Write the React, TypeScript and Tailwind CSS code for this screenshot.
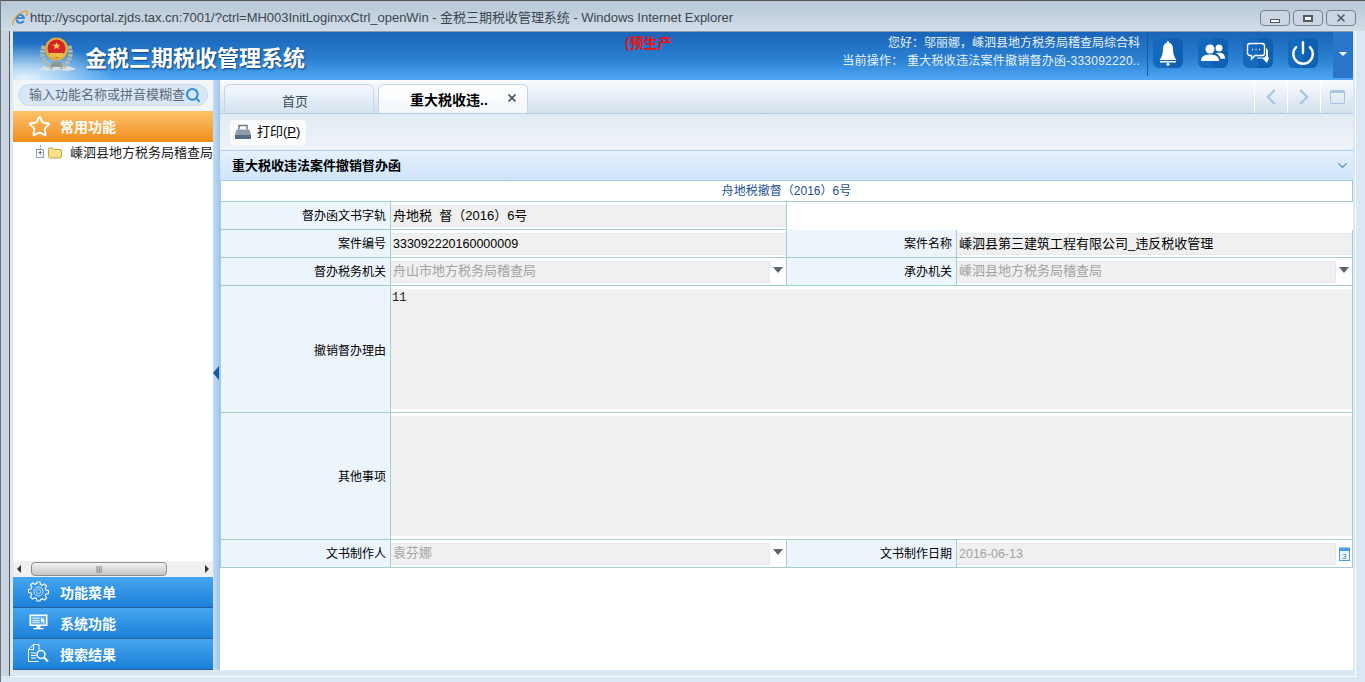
import { Power, ChevronLeft, ChevronRight, ChevronDown, Search, X, Star } from "lucide-react";

const FONT = "font-['Liberation_Sans','Noto_Sans_CJK_SC',sans-serif]";

function IeLogo() {
  return (
    <svg width="16" height="16" viewBox="0 0 16 16" className="shrink-0">
      <path
        d="M3.500 9h9.500c0-3-2-5-4.800-5C5.300 4 3.500 6.200 3.500 9c0 2.800 1.900 4.800 4.700 4.800 2.100 0 3.800-1.100 4.500-3H10c-.4.800-1 1.200-1.800 1.200-1.300 0-2.100-.9-2.100-2.100zM6.200 7.300C6.400 6.400 7.100 5.800 8.200 5.800s1.800.6 2 1.500z"
        fill="#2c86dc"
        fillRule="evenodd"
      />
      <path d="M1 15C-.5 12.500 4 5 9.500 2.300 12.500.8 15.500.5 15.500 2.500c0 1-.5 2.500-1.500 3.700" fill="none" stroke="#dfa21f" strokeWidth="1.200" />
    </svg>
  );
}

function Emblem() {
  return (
    <svg width="40" height="40" viewBox="0 0 40 40" className="shrink-0">
      <path d="M1 33 C9 29 14 29 20 31 C26 29 31 29 39 33 C31 36 26 35 20 34 C14 35 9 36 1 33Z" fill="#d5e1e6" />
      <path d="M7 10 C3 19 7 28 16 32 M32 10 C36 19 32 28 23 32" fill="none" stroke="#aeb9ae" strokeWidth="4.500" strokeDasharray="3 1" />
      <circle cx="19.500" cy="13" r="11.500" fill="#dcae3c" />
      <circle cx="19.500" cy="12.500" r="9" fill="#d5232a" />
      <path d="M19.500 6l1.100 2.700h2.900l-2.300 1.800.9 2.800-2.600-1.700-2.600 1.700.9-2.800-2.300-1.800h2.900z" fill="#f5d34c" />
      <path d="M12.500 17h14v4h-14z" fill="#e8be45" />
      <path d="M15 26h9l2 5H13z" fill="#8d9996" />
    </svg>
  );
}

function Printer() {
  return (
    <svg width="18" height="18" viewBox="0 0 18 18">
      <path d="M5 6.500V2.500h8v4" fill="none" stroke="#6d7b89" strokeWidth="1.500" />
      <path d="M2.500 6.500h13L17 12H1z" fill="#8d9cab" />
      <path d="M1 12h16v4H1z" fill="#566a80" />
    </svg>
  );
}

function Folder() {
  return (
    <svg width="15" height="12" viewBox="0 0 15 12">
      <path d="M.5 2c0-.8.5-1.500 1.500-1.500h3l1.500 1.500h7c.8 0 1.500.5 1.500 1.500V10c0 .8-.5 1.500-1.500 1.500H2c-1 0-1.500-.5-1.500-1.500z" fill="#f8e08a" stroke="#b59a3c" />
    </svg>
  );
}

function BellSolid() {
  return (
    <svg width="20" height="26" viewBox="0 0 20 26" fill="#fff">
      <path d="M10 1c1 0 1.300.8 1.200 1.800C13.500 3.500 15 5.500 15 8.500c0 5 1 8.500 3.500 11.500H1.500C4 17 5 13.500 5 8.500c0-3 1.500-5 3.800-5.700C8.700 1.800 9 1 10 1z" />
      <path d="M2 21h16v1.500H2z" />
      <circle cx="10" cy="24.300" r="1.500" />
    </svg>
  );
}

function UsersSolid() {
  return (
    <svg width="24" height="20" viewBox="0 0 24 20" fill="#fff">
      <circle cx="9" cy="6" r="4.500" />
      <path d="M0 18c0-4.500 3.500-6.500 9-6.500s9 2 9 6.500z" />
      <circle cx="18" cy="5" r="3.500" />
      <path d="M15 10.200c1-.4 2-.5 3-.5 3.500 0 6 1.500 6 6h-4.500c-.5-2.500-2.200-4.300-4.500-5.500z" />
    </svg>
  );
}

function Chat() {
  return (
    <svg width="24" height="24" viewBox="0 0 24 24" fill="none" stroke="#fff" strokeWidth="1.400">
      <path d="M4 2.500h12c1.500 0 2.500 1 2.500 2.500v7c0 1.500-1 2.500-2.500 2.500H9l-3.500 3.500v-3.500H4c-1.500 0-2.500-1-2.500-2.500V5C1.500 3.500 2.500 2.500 4 2.500z" />
      <path d="M6 8.500h1M9.500 8.500h1M13 8.500h1" strokeWidth="1.600" />
      <path d="M20 7c1.500 1 2 2 2 4v5l1 1-2 5-4.500-4.500H11l.5-1H17c2 0 3-1 3-3z" fill="#fff" stroke="none" />
    </svg>
  );
}

function Gear() {
  return (
    <svg width="21" height="21" viewBox="0 0 21 21" fill="none" stroke="#fff">
      <path
        d="M9 1h3l.5 2.500 1.800.8 2.200-1.400 2.100 2.100-1.400 2.200.8 1.800 2.500.5v3l-2.500.5-.8 1.800 1.400 2.200-2.100 2.100-2.200-1.400-1.800.8L12 20H9l-.5-2.500-1.800-.8-2.200 1.400-2.100-2.100 1.400-2.200-.8-1.800L.5 11.500v-3L3 8l.8-1.800-1.400-2.200 2.100-2.100 2.200 1.400 1.800-.8z"
        strokeWidth="1.100"
      />
      <circle cx="10.500" cy="10.500" r="4.500" strokeWidth="1" opacity=".75" />
      <circle cx="10.500" cy="10.500" r="2.200" strokeWidth="1" opacity=".6" />
    </svg>
  );
}

function Screen() {
  return (
    <svg width="19" height="17" viewBox="0 0 19 17">
      <path d="M.5.500h18v11.500H.5z" fill="#fff" />
      <path d="M2 2h15v8.500H2z" fill="#6ab2ee" />
      <path d="M3.500 3.500h7v1.200h-7zM3.500 6h7v1.200h-7zM3.500 8h7v1h-7z" fill="#cfe6fa" />
      <path d="M12 3.500l4 3-1.600.3 1 2-1 .4-1-2-1.400 1z" fill="#fff" />
      <path d="M7.500 12h4v2h-4zM4.500 14h10v1.300h-10z" fill="#fff" />
    </svg>
  );
}

function DocSearch() {
  return (
    <svg width="21" height="19" viewBox="0 0 21 19" fill="none" stroke="#fff">
      <path d="M11 6V.500H5.500L.5 5.500V17.500h10" strokeWidth="1" />
      <path d="M5.500.500v5h-5" strokeWidth="1" />
      <path d="M3 9h5M3 11.500h5M3 14h5" strokeWidth="1" />
      <circle cx="13" cy="10.500" r="4" strokeWidth="1.500" />
      <path d="M16 13.500l4 4" strokeWidth="2" />
    </svg>
  );
}

function Calendar() {
  return (
    <svg width="11" height="14" viewBox="0 0 11 14">
      <rect x=".5" y="1" width="10" height="12.500" fill="#e8f3fd" stroke="#4b9be3" />
      <rect x=".5" y="1" width="10" height="3" fill="#4b9be3" />
      <text x="3.500" y="11.500" fontSize="7" fill="#3a78b5" fontFamily="Liberation Sans">3</text>
    </svg>
  );
}

function Caret() {
  return <span className="h-0 w-0 border-x-[5px] border-t-[6px] border-x-transparent border-t-[#5d6470]" />;
}

function HeadBtn({ children }: { children: React.ReactNode }) {
  return (
    <div className="flex h-[30px] w-[30px] items-center justify-center rounded-md bg-[linear-gradient(to_right,#1369bd_50%,#0f60b0_50%)]">
      {children}
    </div>
  );
}

function Label({ children, className = "" }: { children: React.ReactNode; className?: string }) {
  return (
    <div className={`flex items-center justify-end bg-[#ecf4fc] pr-1 text-xs text-black ${className}`}>{children}</div>
  );
}

function Field({
  value,
  gray,
  caret,
  cal,
  num,
  className = "",
}: {
  value: string;
  gray?: boolean;
  caret?: boolean;
  cal?: boolean;
  num?: boolean;
  className?: string;
}) {
  return (
    <div className={`flex items-center bg-white ${className}`}>
      <div
        className={`flex h-[22px] min-w-0 flex-1 items-center whitespace-pre border-y border-[#dfeaf1] bg-[#f0f0f0] pl-[2px] ${
          num ? "pt-[1px] text-[12.5px]" : "text-[13px]"
        } ${gray ? "text-[#a3a3a3]" : "text-black"} ${caret ? "pb-[1px]" : ""} ${caret || cal ? "border-r" : ""}`}
      >
        {value}
      </div>
      {caret && (
        <div className="flex h-[22px] w-[16px] shrink-0 items-center justify-center bg-white pb-[4px]">
          <Caret />
        </div>
      )}
      {cal && (
        <div className="flex h-[22px] w-[16px] shrink-0 items-center justify-center bg-white">
          <Calendar />
        </div>
      )}
    </div>
  );
}

function TextBlock({ value }: { value?: string }) {
  return (
    <div className="h-full bg-white py-[3px]">
      <div className="h-full whitespace-pre bg-[#f0f0f0] pl-[1px] pt-[1px] font-['Liberation_Mono',monospace] text-xs text-[#222]">
        {value}
      </div>
    </div>
  );
}

const B = "border-b border-[#a6cfcc]";
const R = "border-r border-[#a6cfcc]";

function MenuBar({ icon, label }: { icon: React.ReactNode; label: string }) {
  return (
    <div className="flex h-[31px] items-center gap-[11px] border-b border-[#2a5f9c] bg-gradient-to-b from-[#45a5f0] to-[#1a80d8] pl-[15px] text-sm font-bold text-white">
      <span className="flex w-[21px] justify-center pb-[2px]">{icon}</span>
      <span className="pt-[1px]">{label}</span>
    </div>
  );
}

export default function App() {
  return (
    <div className={`flex h-[682px] w-[1365px] flex-col overflow-hidden border-l border-[#6a7480] bg-[#dbe8f4] ${FONT}`}>
      {/* IE window title */}
      <div className="flex h-[31px] shrink-0 items-center border-t border-[#555] bg-gradient-to-b from-[#b7c7d6] to-[#d3dde8] pl-[11px] pr-[9px] pt-[4px]">
        <IeLogo />
        <span className="ml-[2px] text-[13px] tracking-[-0.03px] text-[#3b4652]">
          http://yscportal.zjds.tax.cn:7001/?ctrl=MH003InitLoginxxCtrl_openWin - 金税三期税收管理系统 - Windows Internet Explorer
        </span>
        <div className="ml-auto flex gap-[3px]">
          <div className="flex h-[16px] w-[30px] items-end justify-center rounded-sm border border-[#76838f] bg-[#cbd6e2] pb-[2px]">
            <span className="h-[4px] w-[10px] border border-[#4e5964] bg-white" />
          </div>
          <div className="flex h-[16px] w-[30px] items-center justify-center rounded-sm border border-[#76838f] bg-[#cbd6e2]">
            <span className="h-[7px] w-[10px] border-2 border-[#4e5964] bg-white" />
          </div>
          <div className="flex h-[16px] w-[30px] items-center justify-center rounded-sm border border-[#76838f] bg-[#cbd6e2]">
            <X size={12} strokeWidth={3} color="#4e5964" />
          </div>
        </div>
      </div>

      <div className="flex h-[645px] shrink-0">
        {/* left window frame */}
        <div className="w-[8px] shrink-0 bg-[#c9d6e2]" />
        <div className="w-[1px] shrink-0 bg-[#555]" />
        <div className="w-[3px] shrink-0 bg-[#dbe8f4]" />

        <div className="flex h-[639px] w-[1340px] shrink-0 flex-col">
          {/* system header */}
          <div className="flex h-[49px] shrink-0 items-stretch border-t border-[#8a9bab] bg-[radial-gradient(ellipse_90px_34px_at_12px_46px,#e6f2fb_0%,rgba(230,242,251,0)_100%),linear-gradient(to_bottom,#1a64b8_0%,#2a7fd0_55%,#4fa8f5_100%)]">
            <div className="flex w-[291px] shrink-0 items-center pl-[24px]">
              <Emblem />
              <span className="ml-[8px] whitespace-nowrap pt-[4px] text-[22px] font-bold text-white [text-shadow:1px_1px_2px_#0c3f78]">金税三期税收管理系统</span>
            </div>
            <span className="ml-[321px] mt-[2px] text-sm font-bold leading-[18px] text-[#f01010]">(预生产</span>
            <div className="ml-auto flex flex-col items-end pr-[7px] pt-[2px] text-xs leading-[18px] text-[#e8f2fb]">
              <span>您好：邬丽娜，嵊泗县地方税务局稽查局综合科</span>
              <span className="tracking-[0.25px]">当前操作： 重大税收违法案件撤销督办函-333092220..</span>
            </div>
            <div className="mb-[4px] flex items-center gap-[15px] border-l border-[#135aa6] pb-[2px] pl-[5px]">
              <HeadBtn><BellSolid /></HeadBtn>
              <HeadBtn><UsersSolid /></HeadBtn>
              <HeadBtn><Chat /></HeadBtn>
              <HeadBtn><Power size={26} color="#fff" strokeWidth={2.200} /></HeadBtn>
            </div>
            <div className="mb-[2px] ml-[15px] flex w-[20px] items-center justify-center bg-[#2a76c8] pb-[3px]">
              <span className="h-0 w-0 border-x-[4px] border-t-[4px] border-x-transparent border-t-white" />
            </div>
          </div>

          <div className="flex min-h-0 flex-1">
            {/* sidebar */}
            <div className="flex w-[200px] shrink-0 flex-col overflow-hidden bg-white">
              <div className="flex h-[31px] shrink-0 items-center bg-[#f2f6fb] px-[5px] pb-[1px]">
                <div className="flex h-[22px] w-full items-center rounded-full border border-[#cbdcef] bg-[#d9e6f5] pl-[10px] text-[13px] text-[#5f6c7a]">
                  <span className="shrink-0 whitespace-nowrap">输入功能名称或拼音模糊查</span>
                  <Search size={16} strokeWidth={3} color="#2f8ad8" className="shrink-0" />
                </div>
              </div>
              <div className="flex h-[31px] shrink-0 items-center gap-[9px] bg-gradient-to-b from-[#fdc368] to-[#f08c10] pl-[15px] text-sm font-bold text-white">
                <Star size={23} color="#fff" strokeWidth={2} fill="none" />
                常用功能
              </div>
              <div className="flex h-[22px] shrink-0 items-center whitespace-nowrap pl-[23px] text-[13px] text-[#222]">
                <span className="relative mr-[4px] flex h-[9px] w-[9px] items-center justify-center border border-[#8d9bb0] bg-white text-[9px] leading-none text-[#234]">
                  +
                  <span className="absolute bottom-[8px] left-[3px] h-[4px] border-l border-dotted border-[#8d9bb0]" />
                </span>
                <Folder />
                <span className="ml-[8px]">嵊泗县地方税务局稽查局</span>
              </div>
              <div className="flex-1" />
              <div className="flex h-[16px] shrink-0 items-center bg-[#f0f0f0] px-[4px]">
                <span className="h-0 w-0 border-y-[4px] border-r-[4px] border-y-transparent border-r-[#333]" />
                <div className="ml-[10px] flex h-[14px] w-[136px] items-center justify-center rounded-sm border border-[#8e8e8e] bg-gradient-to-b from-[#f2f2f2] to-[#c6c6c6] text-[8px] leading-none text-[#555]">|||</div>
                <span className="ml-auto h-0 w-0 border-y-[4px] border-l-[4px] border-y-transparent border-l-[#333]" />
              </div>
              <MenuBar icon={<Gear />} label="功能菜单" />
              <MenuBar icon={<Screen />} label="系统功能" />
              <MenuBar icon={<DocSearch />} label="搜索结果" />
            </div>

            {/* splitter */}
            <div className="flex w-[7px] shrink-0 items-center bg-gradient-to-r from-[#c5dcf5] to-[#9fc5ee] pb-[5px]">
              <span className="h-0 w-0 border-y-[7px] border-r-[6px] border-y-transparent border-r-[#0f5aa0]" />
            </div>

            {/* main */}
            <div className="flex min-w-0 flex-1 flex-col bg-white">
              <div className="flex h-[34px] shrink-0 items-end border-b border-[#b4cde6] bg-gradient-to-b from-[#fafcfe] to-[#d3e0ed] pl-[4px]">
                <div className="flex h-[29px] w-[150px] items-center justify-center rounded-t-md border border-b-0 border-[#c2d7ed] bg-gradient-to-b from-[#f4f8fc] to-[#d6e3f0] pr-[8px] pt-[5px] text-[13px] text-[#3e4a58]">
                  首页
                </div>
                <div className="relative ml-[4px] flex h-[29px] w-[150px] items-center rounded-t-md border border-b-0 border-[#c2d7ed] bg-gradient-to-b from-[#ffffff] to-[#f3f7fb] pl-[31px] pt-[1px] text-sm font-bold text-black">
                  重大税收违..
                  <X size={12} strokeWidth={3.500} color="#3c4a60" className="absolute right-[9px] top-[7px]" />
                </div>
                <div className="ml-auto flex h-[33px] items-center">
                  <div className="flex h-[33px] w-[33px] items-center justify-center border-l border-white">
                    <ChevronLeft size={26} color="#a8c4e3" />
                  </div>
                  <div className="flex h-[33px] w-[33px] items-center justify-center border-l border-white">
                    <ChevronRight size={26} color="#a8c4e3" />
                  </div>
                  <div className="flex h-[33px] w-[33px] items-center justify-center border-l border-white">
                    <span className="h-[14px] w-[15px] rounded-[2px] border border-t-[3px] border-[#a8c4e3]" />
                  </div>
                </div>
              </div>

              <div className="flex h-[37px] shrink-0 items-center border-b border-[#b0d0ef] bg-gradient-to-b from-[#e2ebf3] to-[#eef3f8] pl-[10px]">
                <div className="flex h-[25px] items-center gap-[5px] rounded-sm bg-[#fafcfe] pl-[4px] pr-[6px] text-[13px] text-black">
                  <Printer />
                  <span>打印(<span className="underline">P</span>)</span>
                </div>
              </div>

              <div className="flex h-[29px] shrink-0 items-center justify-between bg-gradient-to-b from-[#e6f1fd] to-[#cfe4fb] pl-[12px] pr-[3px] text-[13px] font-bold text-black">
                重大税收违法案件撤销督办函
                <ChevronDown size={15} color="#4a90d8" />
              </div>

              {/* form */}
              <div className="border-t border-[#a9cfe0]">
                <div className={`flex h-[21px] items-center justify-center border-x border-[#a6cfcc] bg-white text-xs text-[#1c4f95] ${B}`}>
                  舟地税撤督（2016）6号
                </div>
                <div className="grid grid-cols-[170px_396px_170px_396px] grid-rows-[28px_28px_28px_127px_127px_28px] border-l border-[#a6cfcc]">
                  <Label className={`${B} ${R}`}>督办函文书字轨</Label>
                  <Field className={`${B} ${R}`} value="舟地税  督（2016）6号" />
                  <div className="col-span-2 bg-white" />

                  <Label className={`${B} ${R}`}>案件编号</Label>
                  <Field className={`${B} ${R}`} value="333092220160000009" num />
                  <Label className={`${B} ${R}`}>案件名称</Label>
                  <Field className={`${B} ${R}`} value="嵊泗县第三建筑工程有限公司_违反税收管理" />

                  <Label className={`${B} ${R}`}>督办税务机关</Label>
                  <Field className={`${B} ${R}`} value="舟山市地方税务局稽查局" gray caret />
                  <Label className={`${B} ${R}`}>承办机关</Label>
                  <Field className={`${B} ${R}`} value="嵊泗县地方税务局稽查局" gray caret />

                  <Label className={`${B} ${R} pt-[3px]`}>撤销督办理由</Label>
                  <div className={`col-span-3 ${B} ${R}`}><TextBlock value="11" /></div>

                  <Label className={`${B} ${R} pt-[2px]`}>其他事项</Label>
                  <div className={`col-span-3 ${B} ${R}`}><TextBlock /></div>

                  <Label className={`${B} ${R}`}>文书制作人</Label>
                  <Field className={`${B} ${R}`} value="袁芬娜" gray caret />
                  <Label className={`${B} ${R}`}>文书制作日期</Label>
                  <Field className={`${B} ${R}`} value="2016-06-13" gray cal num />
                </div>
              </div>
              <div className="flex-1 bg-white" />
            </div>
          </div>
        </div>

        <div className="w-[3px] shrink-0 border-r border-white bg-[#dbe8f4]" />
        <div className="flex-1 bg-[#dbe8f4]" />
      </div>
      <div className="ml-[9px] mr-[8px] h-[1px] shrink-0 bg-white" />
    </div>
  );
}
